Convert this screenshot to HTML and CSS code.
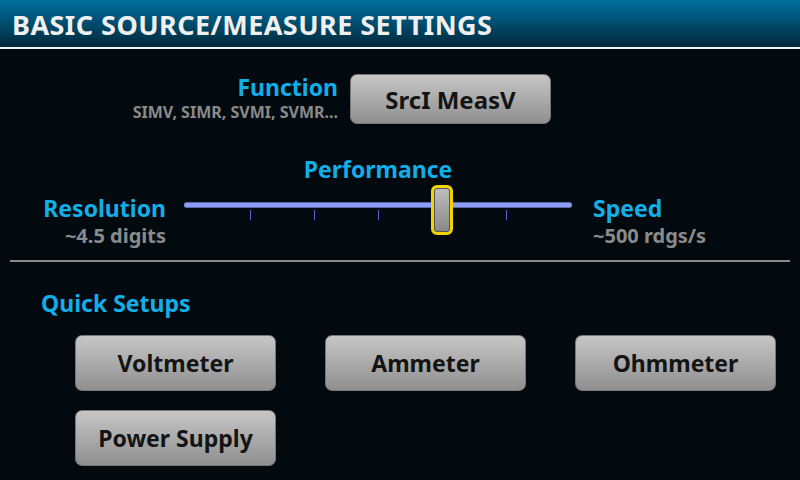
FILE: index.html
```html
<!DOCTYPE html>
<html>
<head>
<meta charset="utf-8">
<link rel="stylesheet" href="styles.css">
</head>
<body>
<div class="screen">
  <header class="header">BASIC SOURCE/MEASURE SETTINGS</header>
  <section class="func-row">
    <div class="func-labels">
      <div class="label">Function</div>
      <div class="sub">SIMV, SIMR, SVMI, SVMR...</div>
    </div>
    <button class="btn func-btn">SrcI MeasV</button>
  </section>
  <section class="perf">
    <div class="label perf-title">Performance</div>
    <div class="perf-row">
      <div class="side left">
        <div class="label">Resolution</div>
        <div class="sub big">~4.5 digits</div>
      </div>
      <div class="slider">
        <div class="track"></div>
        <div class="ticks">
          <span class="tick"></span><span class="tick"></span><span class="tick"></span><span class="tick"></span><span class="tick"></span>
        </div>
        <div class="thumb"></div>
      </div>
      <div class="side right">
        <div class="label">Speed</div>
        <div class="sub big">~500 rdgs/s</div>
      </div>
    </div>
  </section>
  <hr class="divider">
  <section class="quick">
    <div class="label quick-title">Quick Setups</div>
    <div class="quick-grid">
      <button class="btn q-btn">Voltmeter</button>
      <button class="btn q-btn">Ammeter</button>
      <button class="btn q-btn">Ohmmeter</button>
      <button class="btn q-btn">Power Supply</button>
    </div>
  </section>
</div>
</body>
</html>
```
FILE: styles.css
```css
* { box-sizing: border-box; }
html, body { margin: 0; padding: 0; }
body {
  width: 800px;
  height: 480px;
  overflow: hidden;
  background: #020a0f;
  font-family: "Noto Sans", "Open Sans", "DejaVu Sans", sans-serif;
  font-weight: 700;
}
.screen { width: 800px; height: 480px; display: flex; flex-direction: column; }
.header {
  height: 49px;
  background: linear-gradient(#0070a0, #00283a);
  border-bottom: 2px solid #f4f4f4;
  color: #f0f0f0;
  font-size: 27px;
  letter-spacing: 0.45px;
  padding: 9px 0 0 12px;
  line-height: 32px;
  white-space: nowrap;
}
.label { color: #12aee8; font-size: 23px; line-height: 26px; }
.sub { color: #8a8a8a; font-size: 16px; line-height: 18px; }
.sub.big { font-size: 20px; line-height: 24px; }
.btn {
  font-family: inherit;
  font-weight: 700;
  color: #141414;
  border: 1px solid #777;
  border-radius: 7px;
  background: linear-gradient(#c6c6c6, #8f8f8f);
  padding: 0;
  margin: 0;
}
.func-row {
  display: flex;
  align-items: flex-start;
  margin-top: 25px;
  height: 50px;
}
.func-labels {
  width: 338px;
  text-align: right;
  padding-top: 0;
}
.func-labels .sub { margin-top: 3px; }
.func-btn {
  margin-left: 12px;
  width: 201px;
  height: 50px;
  font-size: 24px;
}
.perf { margin-top: 32px; }
.perf-title { text-align: center; width: 756px; line-height: 26px; }
.perf-row { display: flex; align-items: flex-start; margin-top: 0; }
.side { width: 166px; padding-top: 13px; }
.side.left { text-align: right; }
.side .sub { margin-top: 3px; }
.side.right { padding-left: 21px; width: auto; }
.slider {
  position: relative;
  width: 388px;
  height: 54px;
  margin-left: 18px;
}
.track {
  position: absolute;
  left: 0; right: 0; top: 20px;
  height: 6px;
  background: #8c9cf0;
  border-top: 1px solid #5a68b0;
  border-bottom: 1px solid #5a68b0;
  border-radius: 3px;
}
.ticks {
  position: absolute;
  left: 66px;
  top: 28px;
  display: flex;
  gap: 63px;
}
.tick { width: 1px; height: 10px; background: #5862d8; }
.thumb {
  position: absolute;
  left: 247px;
  top: 3px;
  width: 22px;
  height: 50px;
  border: 3px solid #f2d400;
  border-radius: 6px;
  background: linear-gradient(#bebebe, #888);
  box-shadow: inset 0 0 0 1px #555;
}
.divider {
  margin: 12px 10px 0 10px;
  border: 0;
  height: 2px;
  background: #8a8a8a;
}
.quick { padding-left: 41px; margin-top: 28px; }
.quick-title { line-height: 26px; }
.quick-grid {
  display: grid;
  grid-template-columns: repeat(3, 201px);
  column-gap: 49px;
  row-gap: 19px;
  margin-top: 19px;
  margin-left: 34px;
}
.q-btn { height: 56px; font-size: 23px; }
```
